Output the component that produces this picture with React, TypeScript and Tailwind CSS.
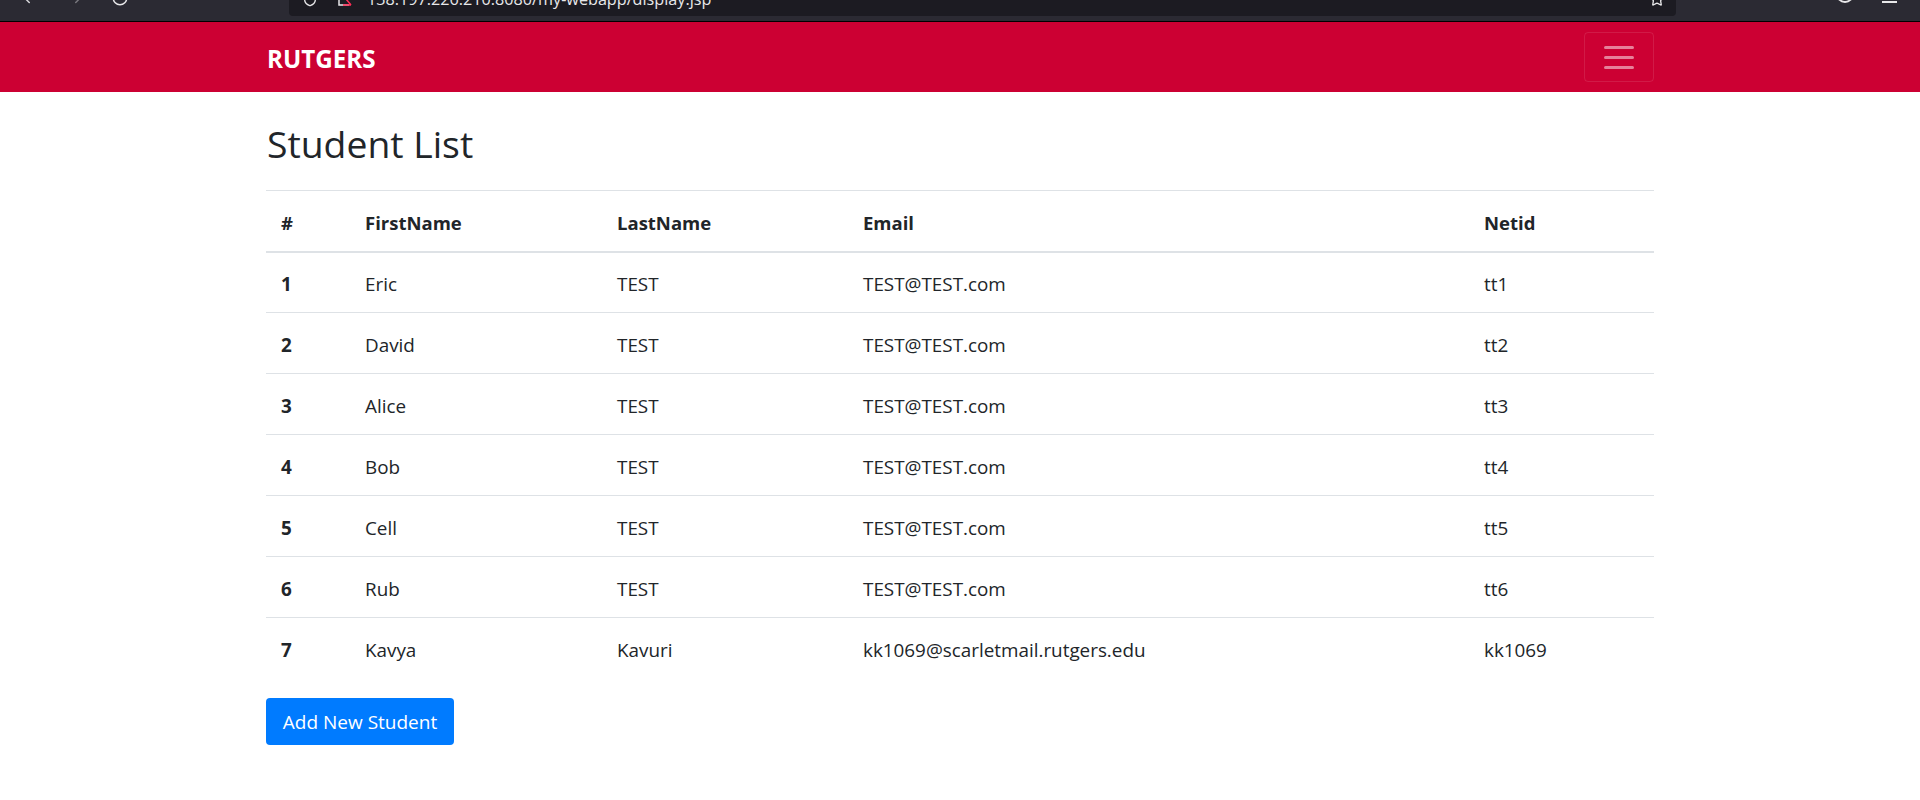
import { ChevronLeft, ChevronRight, RotateCw, Shield, Star } from 'lucide-react'

const students = [
  { id: 1, first: 'Eric', last: 'TEST', email: 'TEST@TEST.com', netid: 'tt1' },
  { id: 2, first: 'David', last: 'TEST', email: 'TEST@TEST.com', netid: 'tt2' },
  { id: 3, first: 'Alice', last: 'TEST', email: 'TEST@TEST.com', netid: 'tt3' },
  { id: 4, first: 'Bob', last: 'TEST', email: 'TEST@TEST.com', netid: 'tt4' },
  { id: 5, first: 'Cell', last: 'TEST', email: 'TEST@TEST.com', netid: 'tt5' },
  { id: 6, first: 'Rub', last: 'TEST', email: 'TEST@TEST.com', netid: 'tt6' },
  { id: 7, first: 'Kavya', last: 'Kavuri', email: 'kk1069@scarletmail.rutgers.edu', netid: 'kk1069' },
]

function BrowserBar() {
  return (
    <div className="h-[22px] bg-[#2b2a33] border-b border-black overflow-hidden relative">
      {/* cropped toolbar, only the lower edge of the icons shows */}
      <ChevronLeft size={18} className="absolute left-[18px] -top-[11px] text-[#d6d6da]" />
      <ChevronRight size={18} className="absolute left-[69px] -top-[11px] text-[#77767d]" />
      <RotateCw size={18} className="absolute left-[111px] -top-[11px] text-[#e8e8ea]" />
      <div className="absolute left-[289px] w-[1387px] -top-[18px] h-[34px] bg-[#1c1b22] rounded-[4px] flex items-center pl-[13px] text-[#e8e8ea]">
        <Shield size={16} />
        <svg width="16" height="16" viewBox="0 0 16 16" fill="none" className="ml-[19px]">
          <path d="M2 2v12h10" stroke="#e8e8ea" strokeWidth="1.5" />
          <path d="M6 14h8M14 14L9 8" stroke="#ff2d55" strokeWidth="1.5" />
        </svg>
        <span className="ml-[14px] text-[16.2px] whitespace-nowrap">138.197.226.210:8080/my-webapp/display.jsp</span>
        <Star size={16} className="ml-auto mr-[11px]" />
      </div>
      <div className="absolute left-[1836px] -top-[15px] w-[18px] h-[18px] rounded-full border-2 border-[#e8e8ea]" />
      <div className="absolute left-[1882px] top-[1px] w-[15px] h-[2px] bg-[#e8e8ea]" />
    </div>
  )
}

export default function App() {
  return (
    <div className="min-h-[800px] bg-white text-[#212529] font-['Open_Sans','Noto_Sans',sans-serif]">
      <BrowserBar />
      <nav className="h-[70px] bg-[#cc0033]">
        <div className="w-[1388px] mx-auto h-full flex items-center justify-between pl-px">
          <span className="text-[24.2px] font-bold text-white pt-[4px]">RUTGERS</span>
          <button className="w-[70px] h-[50px] border border-white/10 rounded-[4px] flex flex-col items-center justify-center gap-[7px]">
            <span className="w-[30px] h-[3px] rounded-full bg-white/50" />
            <span className="w-[30px] h-[3px] rounded-full bg-white/50" />
            <span className="w-[30px] h-[3px] rounded-full bg-white/50" />
          </button>
        </div>
      </nav>
      <main className="w-[1388px] mx-auto">
        <h2 className="text-[37.3px] leading-[48px] mt-[28px] mb-[22px] pl-px">Student List</h2>
        <table className="w-full table-fixed text-[18.85px] border-collapse">
          <thead>
            <tr className="h-[61px] border-t border-[#dee2e6] border-b-2 text-left text-[18.5px]">
              <th className="w-[84px] px-[15px] pt-[5px] font-bold">#</th>
              <th className="w-[252px] px-[15px] pt-[5px] font-bold">FirstName</th>
              <th className="w-[246px] px-[15px] pt-[5px] font-bold">LastName</th>
              <th className="w-[621px] px-[15px] pt-[5px] font-bold">Email</th>
              <th className="px-[15px] pt-[5px] font-bold">Netid</th>
            </tr>
          </thead>
          <tbody>
            {students.map((s) => (
              <tr key={s.id} className="h-[61px] border-b border-[#dee2e6] last:border-b-0">
                <td className="px-[15px] pt-[4px] font-bold">{s.id}</td>
                <td className="px-[15px] pt-[4px]">{s.first}</td>
                <td className="px-[15px] pt-[4px]">{s.last}</td>
                <td className="px-[15px] pt-[4px]">{s.email}</td>
                <td className="px-[15px] pt-[4px]">{s.netid}</td>
              </tr>
            ))}
          </tbody>
        </table>
        <button className="block mt-[19px] h-[47px] w-[188px] pt-[3px] bg-[#007bff] text-white text-[19px] rounded-[4px]">
          Add New Student
        </button>
      </main>
    </div>
  )
}
